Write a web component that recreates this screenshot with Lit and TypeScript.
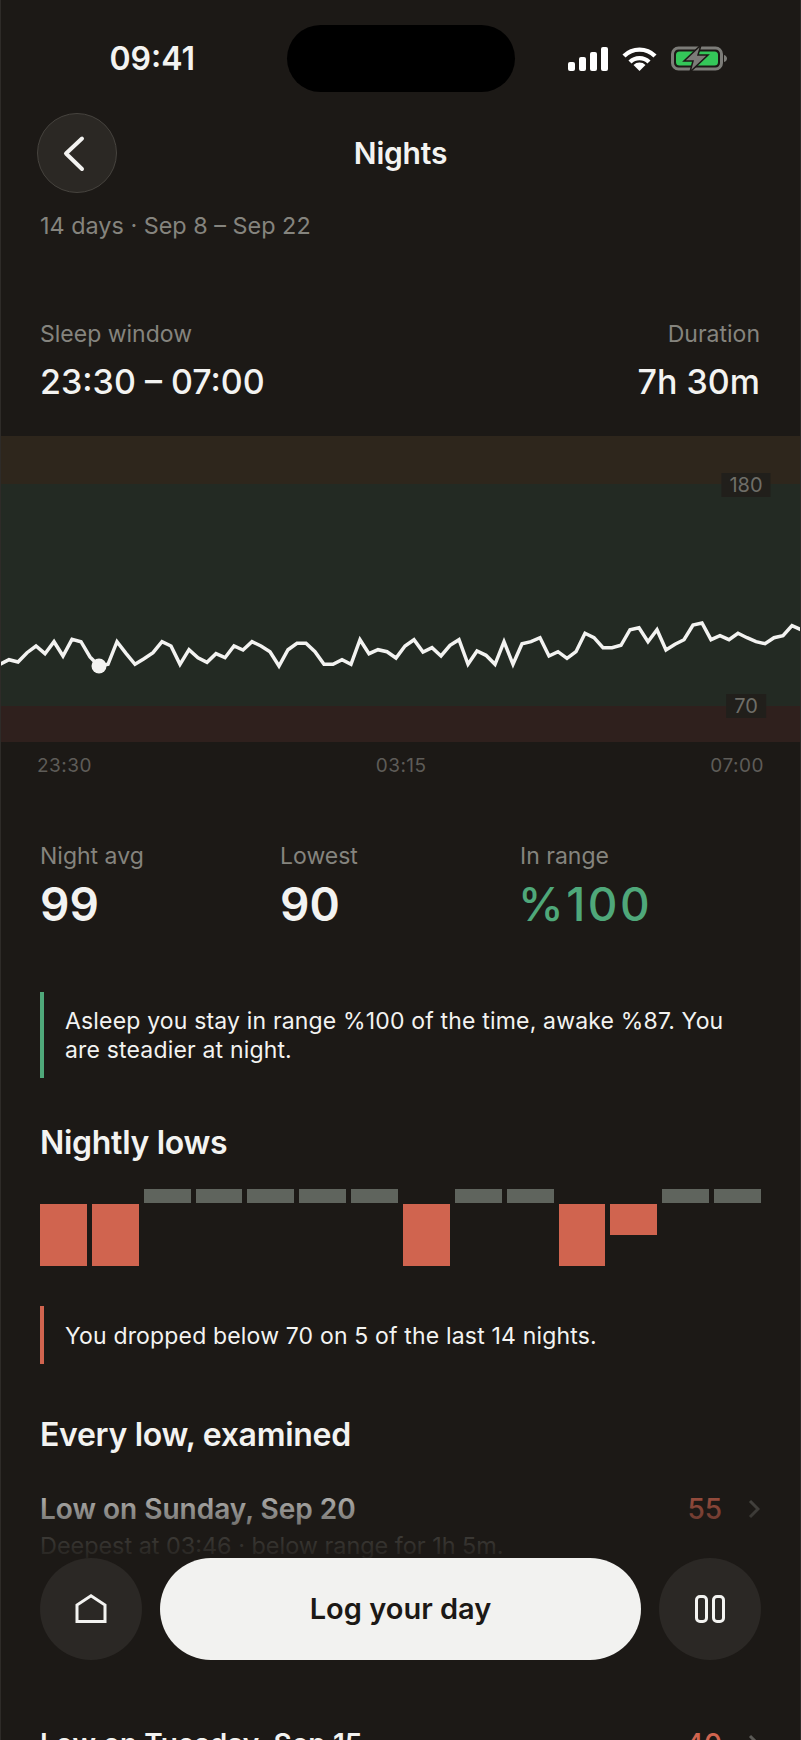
import { LitElement, html, css, svg } from "lit";
import { customElement } from "lit/decorators.js";

// y of the trace, one sample every 9px, traced from the reference (3x values)
const TRACE = [
  730, 716, 723, 695, 675, 698, 662, 705, 655, 662, 708, 735, 730, 662, 697, 730, 713, 695, 662, 675, 730, 686, 710,
  724, 698, 710, 675, 687, 662, 675, 692, 735, 686, 667, 667, 692, 730, 730, 716, 730, 656, 698, 686, 692, 711, 675,
  656, 693, 680, 705, 673, 656, 730, 690, 703, 730, 662, 730, 668, 662, 650, 705, 692, 712, 692, 637, 650, 680, 680,
  673, 626, 620, 662, 626, 687, 670, 656, 612, 606, 656, 644, 656, 637, 650, 662, 668, 650, 644, 614, 626,
];

const NIGHTS = [62, 62, 0, 0, 0, 0, 0, 62, 0, 0, 62, 31, 0, 0];

const STATS = [
  { label: "Night avg", value: "99", good: false },
  { label: "Lowest", value: "90", good: false },
  { label: "In range", value: "%100", good: true },
];

@customElement("app-root")
export class AppRoot extends LitElement {
  static styles = css`
    :host {
      display: block;
      position: relative;
      width: 801px;
      height: 1740px;
      overflow: hidden;
      box-sizing: border-box;
      background: #1c1916;
      border-left: 1px solid #2e2b28;
      border-right: 1px solid #2e2b28;
      color: #f3f3f1;
      font-family: Inter, "Liberation Sans", sans-serif;
    }

    .status {
      display: grid;
      grid-template-columns: 1fr 228px 1fr;
      align-items: center;
      height: 67px;
      padding-top: 25px;
    }
    .time {
      padding-left: 17px;
      text-align: center;
      font-size: 32px;
      font-weight: 600;
    }
    .island {
      height: 67px;
      border-radius: 34px;
      background: #000;
    }
    .status-icons {
      display: flex;
      align-items: center;
      gap: 14px;
      padding-left: 53px;
    }
    .status-icons svg {
      display: block;
    }

    .nav {
      display: grid;
      grid-template-columns: 80px 1fr 80px;
      align-items: center;
      margin-top: 21px;
      padding: 0 36px;
    }
    .back {
      width: 80px;
      height: 80px;
      box-sizing: border-box;
      border-radius: 50%;
      background: #2b2824;
      border: 1.5px solid #46433e;
    }
    .back svg {
      display: block;
      margin: -1.5px;
    }
    .title {
      text-align: center;
      font-size: 30px;
      font-weight: 600;
      letter-spacing: -0.2px;
    }

    .sub {
      margin-top: 18px;
      padding: 0 39px;
      font-size: 23.4px;
      line-height: 30px;
      color: #85847e;
    }

    .window {
      display: flex;
      justify-content: space-between;
      margin-top: 78px;
      padding: 0 40px 0 39px;
    }
    .window .end {
      text-align: right;
    }
    .label {
      font-size: 23px;
      line-height: 30px;
      color: #85847e;
    }
    .window-value {
      margin-top: 11px;
      font-size: 34px;
      line-height: 44px;
      font-weight: 500;
    }

    .chart {
      position: relative;
      margin-top: 32px;
    }
    .band-high {
      height: 48px;
      background: #2e261c;
    }
    .band-ok {
      height: 222px;
      background: #232a23;
    }
    .band-low {
      height: 36px;
      background: #2f201d;
    }
    .trace {
      position: absolute;
      left: -1px;
      top: 0;
    }
    .limit {
      position: absolute;
      transform: translateX(-50%);
      left: 745px;
      height: 24px;
      padding: 0 8px;
      background: #211f1b;
      color: #6f6e68;
      font-size: 20px;
      line-height: 24px;
    }

    .axis {
      display: flex;
      justify-content: space-between;
      margin-top: 12px;
      padding: 0 36px;
      font-size: 19px;
      line-height: 24px;
      letter-spacing: 0.5px;
      color: #5e5c58;
    }

    .stats {
      display: grid;
      grid-template-columns: repeat(3, 240px);
      margin-top: 63px;
      padding: 0 39px;
    }
    .stat-value {
      margin-top: 5px;
      font-size: 46px;
      line-height: 56px;
      font-weight: 600;
    }
    .stat-value.good {
      margin-left: -2px;
      letter-spacing: 2.5px;
      font-weight: 500;
      color: #4fa87a;
    }

    .note {
      display: flex;
      align-items: center;
      box-sizing: border-box;
      margin: 0 39px;
      padding: 2px 20px 0 21px;
      border-left: 4px solid #4fa87a;
      font-size: 23px;
      line-height: 29px;
      letter-spacing: 0.17px;
    }
    .note.steady {
      height: 86px;
      margin-top: 60px;
    }
    .note.lows {
      height: 58px;
      margin-top: 40px;
      border-left-color: #d0644f;
    }

    h2 {
      margin: 0;
      padding: 0 39px;
      font-size: 32px;
      line-height: 40px;
      font-weight: 600;
      letter-spacing: -0.3px;
    }
    .h-nightly {
      margin-top: 45px;
    }
    .h-every {
      margin-top: 51px;
    }

    .bars {
      display: grid;
      grid-template-columns: repeat(14, 1fr);
      gap: 5px;
      height: 77px;
      margin-top: 26px;
      padding: 0 39px;
    }
    .bar-ok {
      height: 14px;
      background: #5f645d;
    }
    .bar-low {
      margin-top: 15px;
      background: #d0644f;
    }

    .row {
      display: flex;
      justify-content: space-between;
      padding: 0 39px;
    }
    .row.first {
      height: 235px;
      margin-top: 34px;
    }
    .row-title {
      font-size: 28px;
      line-height: 40px;
      font-weight: 600;
    }
    .row-detail {
      margin-top: 2px;
      font-size: 23.4px;
      line-height: 30px;
      color: #85847e;
    }
    .row-end {
      display: flex;
      align-items: center;
      gap: 26px;
      height: 40px;
      padding-right: 1px;
      font-size: 28px;
      font-weight: 500;
      color: #d0644f;
    }

    .dock {
      position: absolute;
      left: 0;
      right: 0;
      bottom: 10px;
      display: flex;
      gap: 18px;
      padding: 95px 39px 70px;
      background: linear-gradient(#1c191600, #1c1916 105px);
    }
    .round {
      display: flex;
      align-items: center;
      justify-content: center;
      flex: none;
      width: 102px;
      height: 102px;
      border-radius: 50%;
      background: #2b2825;
    }
    .cta {
      display: flex;
      align-items: center;
      justify-content: center;
      flex: 1;
      box-sizing: border-box;
      height: 102px;
      padding-bottom: 2px;
      border-radius: 51px;
      background: #f2f2f0;
      color: #1c1916;
      font-size: 29px;
      font-weight: 600;
    }
  `;

  private chevron() {
    return html`<svg width="12" height="20" viewBox="0 0 12 20" fill="none">
      <path d="M2 2l8 8-8 8" stroke="#5a5955" stroke-width="3" />
    </svg>`;
  }

  private statusIcons() {
    return html`<div class="status-icons">
      <svg width="40" height="24" viewBox="0 0 40 24" fill="#fff">
        <rect x="0" y="15" width="7" height="9" rx="2" />
        <rect x="11" y="10" width="7" height="14" rx="2" />
        <rect x="22" y="5" width="7" height="19" rx="2" />
        <rect x="33" y="0" width="7" height="24" rx="2" />
      </svg>
      <svg width="35" height="24" viewBox="0 0 35 24" fill="none" stroke="#fff" stroke-width="4.4">
        <path d="M2 9a22 22 0 0 1 31 0" />
        <path d="M8 15a13.500 13.500 0 0 1 19 0" />
        <path d="M17.500 24l-6-6a8.500 8.500 0 0 1 12 0z" fill="#fff" stroke="none" />
      </svg>
      <svg width="56" height="27" viewBox="0 0 56 27" fill="none">
        <rect x="1.500" y="3" width="49" height="21" rx="6" stroke="#7c7c78" stroke-width="3" />
        <rect x="5" y="6.500" width="42" height="14" rx="3.500" fill="#34c759" />
        <path d="M53 10c2 .5 3 2 3 3.500s-1 3-3 3.500z" fill="#7c7c78" />
        <path d="M30 0L13 16h9l-3 11 18-17H27z" fill="#7c7c78" stroke="#1c1916" stroke-width="1.500" />
      </svg>
    </div>`;
  }

  private trace() {
    const points = TRACE.map((y, i) => `${i * 9},${(y / 3 + 420 - 435).toFixed(1)}`).join(" ");
    return svg`<svg class="trace" width="801" height="306" viewBox="0 0 801 306" fill="none">
      <polyline points=${points} stroke="#f3f3f1" stroke-width="3.500" stroke-linejoin="miter" />
      <circle cx="99" cy="230" r="7.500" fill="#f3f3f1" />
    </svg>`;
  }

  render() {
    return html`
      <div class="status">
        <div class="time">09:41</div>
        <div class="island"></div>
        ${this.statusIcons()}
      </div>

      <div class="nav">
        <div class="back">
          <svg width="80" height="80" viewBox="0 0 80 80" fill="none">
            <path d="M45 25.500L29 40.500 45 56" stroke="#f3f3f1" stroke-width="4" stroke-linecap="round" stroke-linejoin="round" />
          </svg>
        </div>
        <div class="title">Nights</div>
      </div>
      <div class="sub">14 days · Sep 8 – Sep 22</div>

      <div class="window">
        <div>
          <div class="label">Sleep window</div>
          <div class="window-value">23:30 – 07:00</div>
        </div>
        <div class="end">
          <div class="label">Duration</div>
          <div class="window-value">7h 30m</div>
        </div>
      </div>

      <div class="chart">
        <div class="band-high"></div>
        <div class="band-ok"></div>
        <div class="band-low"></div>
        ${this.trace()}
        <div class="limit" style="top: 37px">180</div>
        <div class="limit" style="top: 258px">70</div>
      </div>
      <div class="axis"><span>23:30</span><span>03:15</span><span>07:00</span></div>

      <div class="stats">
        ${STATS.map(
          (s) => html`<div>
            <div class="label">${s.label}</div>
            <div class="stat-value ${s.good ? "good" : ""}">${s.value}</div>
          </div>`
        )}
      </div>

      <div class="note steady">
        <div>Asleep you stay in range %100 of the time, awake %87. You are steadier at night.</div>
      </div>

      <h2 class="h-nightly">Nightly lows</h2>
      <div class="bars">
        ${NIGHTS.map((h) =>
          h ? html`<div class="bar-low" style="height: ${h}px"></div>` : html`<div class="bar-ok"></div>`
        )}
      </div>
      <div class="note lows">
        <div>You dropped below 70 on 5 of the last 14 nights.</div>
      </div>

      <h2 class="h-every">Every low, examined</h2>
      <div class="row first">
        <div>
          <div class="row-title">Low on Sunday, Sep 20</div>
          <div class="row-detail">Deepest at 03:46 · below range for 1h 5m.</div>
        </div>
        <div class="row-end"><span>55</span>${this.chevron()}</div>
      </div>
      <div class="row">
        <div class="row-title">Low on Tuesday, Sep 15</div>
        <div class="row-end"><span>40</span>${this.chevron()}</div>
      </div>

      <div class="dock">
        <div class="round">
          <svg width="32" height="30" viewBox="0 0 32 30" fill="none">
            <path d="M2 27.500h28V11L16 1.800 2 11z" stroke="#f3f3f1" stroke-width="3" />
          </svg>
        </div>
        <div class="cta">Log your day</div>
        <div class="round">
          <svg width="30" height="28" viewBox="0 0 30 28" fill="none" stroke="#f3f3f1" stroke-width="3">
            <rect x="1.500" y="1.500" width="10" height="25" rx="3.500" />
            <rect x="18.500" y="1.500" width="10" height="25" rx="3.500" />
          </svg>
        </div>
      </div>
    `;
  }
}
